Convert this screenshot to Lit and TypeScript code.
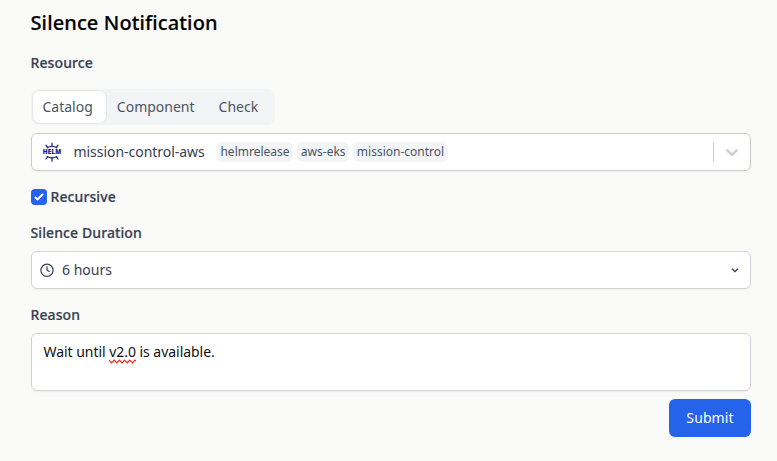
import { LitElement, html, css, svg } from "lit";
import { customElement, state } from "lit/decorators.js";

@customElement("helm-icon")
export class HelmIcon extends LitElement {
  static styles = css`
    :host { display: block; width: 20px; height: 20px; }
    svg { display: block; }
    .word { font: 800 6.2px "Noto Sans", sans-serif; fill: #17178c; stroke: #17178c; stroke-width: 0.2; }
  `;
  render() {
    const half = svg`
      <path d="M4.8 5.9Q10 2.6 15.2 5.9" />
      <path d="M10 4V1M5.4 5.2 4 3.2M14.6 5.2 16 3.2" stroke-linecap="round" />`;
    return html`<svg width="20" height="20" viewBox="0 0 20 20" fill="none" stroke="#17178c" stroke-width="1.2">
      ${half}
      <g transform="matrix(1 0 0 -1 0 20.2)">${half}</g>
      <text class="word" x="0.8" y="12.2" textLength="18.4" lengthAdjust="spacing">HELM</text>
    </svg>`;
  }
}

@customElement("app-root")
export class AppRoot extends LitElement {
  @state() private tab = "Catalog";
  @state() private recursive = true;

  static styles = css`
    :host {
      display: block;
      box-sizing: border-box;
      height: 461px;
      padding: 9px 26px 0 31px;
      background: #fafaf9;
      color: #374151;
      font: 14px/22px "Noto Sans", sans-serif;
    }
    * { box-sizing: border-box; }
    h1 { margin: 0 0 0 -0.5px; font-size: 20px; line-height: 28px; font-weight: 500; letter-spacing: 0.12px; color: #000; -webkit-text-stroke: 0.2px; }
    .label { margin-left: -0.5px; font-size: 14px; line-height: 20px; font-weight: 500; letter-spacing: 0.1px; -webkit-text-stroke: 0.2px; }
    .resource { margin-top: 16px; }
    .tabs {
      display: flex;
      width: 244px;
      height: 36px;
      margin-top: 16px;
      padding: 1px;
      border-radius: 8px;
      background: #f3f4f6;
    }
    .tab {
      height: 34px;
      padding: 0 13px 0 9.5px;
      border: 1px solid transparent;
      border-radius: 8px;
      background: none;
      font: 14px/30px "Noto Sans", sans-serif;
      color: #4b5563;
      white-space: nowrap;
    }
    .tab + .tab { padding-left: 9px; }
    .tab.active { background: #fff; border-color: #e5e7eb; }
    .field {
      display: flex;
      align-items: center;
      width: 720px;
      height: 38px;
      border: 1px solid #d1d5db;
      border-radius: 6px;
      background: #fff;
      box-shadow: 0 1px 2px rgb(0 0 0 / 0.05);
    }
    .picker { margin-top: 8px; border-color: #ccc; padding-left: 10px; }
    .name { margin-left: 11.5px; letter-spacing: -0.04px; }
    .tags { display: flex; gap: 4px; margin-left: 12.3px; }
    .tag {
      height: 20px;
      padding: 0 3.8px 0 3.5px;
      border-radius: 6px;
      background: #f3f4f6;
      color: #4b5563;
      font-size: 12px;
      line-height: 20px;
    }
    .rule { width: 1px; height: 20px; margin-left: auto; background: #ccc; }
    .chevron { margin: 0 8px; fill: #ccc; }
    .check { display: flex; align-items: center; gap: 4px; height: 20px; margin-top: 16px; }
    .box { display: flex; width: 16px; height: 16px; border-radius: 4px; background: #2563eb; }
    .duration { margin-top: 16px; }
    .select { margin-top: 8px; padding: 0 11px 0 8px; }
    .select .value { margin-left: 8px; flex: 1; }
    .reason { margin-top: 16px; }
    .area { height: 58px; margin-top: 8px; padding: 7px 11.5px; align-items: flex-start; color: #111; letter-spacing: -0.04px; }
    .flagged { position: relative; }
    .squiggle { position: absolute; left: 0; bottom: -3px; }
    .actions { display: flex; margin-top: 8px; width: 720px; justify-content: flex-end; }
    .submit {
      width: 82px;
      height: 38px;
      padding: 0;
      border: 0;
      border-radius: 6px;
      background: #2563eb;
      color: #fff;
      font: 14px/22px "Noto Sans", sans-serif;
      letter-spacing: 0.1px;
    }
  `;

  render() {
    return html`
      <h1>Silence Notification</h1>
      <div class="label resource">Resource</div>
      <div class="tabs">
        ${["Catalog", "Component", "Check"].map(
          (t) => html`<button class="tab ${t === this.tab ? "active" : ""}" @click=${() => (this.tab = t)}>${t}</button>`
        )}
      </div>
      <div class="field picker">
        <helm-icon></helm-icon>
        <span class="name">mission-control-aws</span>
        <div class="tags">
          ${["helmrelease", "aws-eks", "mission-control"].map((t) => html`<span class="tag">${t}</span>`)}
        </div>
        <span class="rule"></span>
        <svg class="chevron" width="20" height="20" viewBox="0 0 20 20">
          <path d="M4.516 7.548c0.436-0.446 1.043-0.481 1.576 0l3.908 3.747 3.908-3.747c0.533-0.481 1.141-0.446 1.574 0 0.436 0.445 0.408 1.197 0 1.615-0.406 0.418-4.695 4.502-4.695 4.502-0.217 0.223-0.502 0.335-0.787 0.335s-0.57-0.112-0.789-0.335c0 0-4.287-4.084-4.695-4.502s-0.436-1.17 0-1.615z" />
        </svg>
      </div>
      <div class="check" @click=${() => (this.recursive = !this.recursive)}>
        <span class="box">
          ${this.recursive
            ? html`<svg width="16" height="16" viewBox="0 0 16 16" fill="#fff">
                <path d="M12.207 4.793a1 1 0 0 1 0 1.414l-5 5a1 1 0 0 1-1.414 0l-2-2a1 1 0 0 1 1.414-1.414L6.5 9.086l4.293-4.293a1 1 0 0 1 1.414 0z" />
              </svg>`
            : ""}
        </span>
        <span class="label">Recursive</span>
      </div>
      <div class="label duration">Silence Duration</div>
      <div class="field select">
        <svg width="14" height="14" viewBox="0 0 14 14" fill="none" stroke="#374151" stroke-width="1.2" stroke-linecap="round" stroke-linejoin="round">
          <circle cx="7" cy="7.3" r="6.1" />
          <path d="M7 3.7v3.5l2.3 1.3" />
        </svg>
        <span class="value">6 hours</span>
        <svg width="8" height="6" viewBox="0 0 8 6" fill="none" stroke="#374151" stroke-width="1.3">
          <path d="M1 1.7 4 4.5l3-2.8" />
        </svg>
      </div>
      <div class="label reason">Reason</div>
      <div class="field area"><span>Wait until <span class="flagged">v2.0<svg class="squiggle" width="27" height="5" viewBox="0 0 27 5" fill="none" stroke="#f22" stroke-width="1.2"><path d="M0 1.2 2.6 3.8 5.2 1.2 7.8 3.8 10.4 1.2 13 3.8 15.6 1.2 18.2 3.8 20.8 1.2 23.4 3.8 26 1.2 27 2.2" /></svg></span> is available.</span></div>
      <div class="actions"><button class="submit">Submit</button></div>
    `;
  }
}
